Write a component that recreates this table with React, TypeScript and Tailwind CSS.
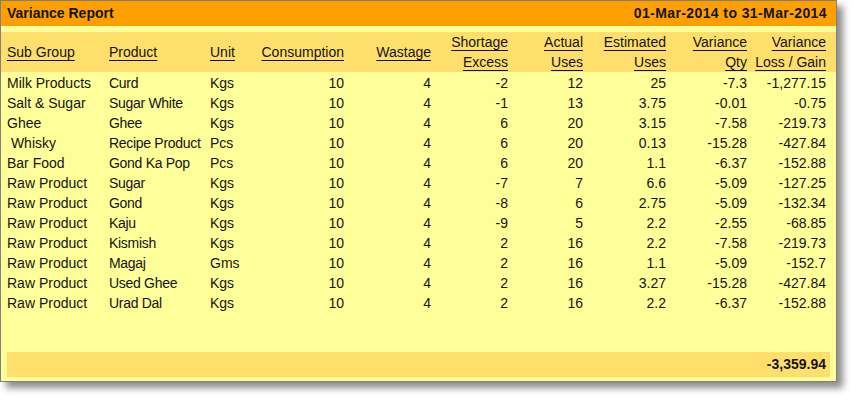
import React from "react";

const rows: string[][] = [
  ["Milk Products", "Curd", "Kgs", "10", "4", "-2", "12", "25", "-7.3", "-1,277.15"],
  ["Salt & Sugar", "Sugar White", "Kgs", "10", "4", "-1", "13", "3.75", "-0.01", "-0.75"],
  ["Ghee", "Ghee", "Kgs", "10", "4", "6", "20", "3.15", "-7.58", "-219.73"],
  ["\u00a0Whisky", "Recipe Product", "Pcs", "10", "4", "6", "20", "0.13", "-15.28", "-427.84"],
  ["Bar Food", "Gond Ka Pop", "Pcs", "10", "4", "6", "20", "1.1", "-6.37", "-152.88"],
  ["Raw Product", "Sugar", "Kgs", "10", "4", "-7", "7", "6.6", "-5.09", "-127.25"],
  ["Raw Product", "Gond", "Kgs", "10", "4", "-8", "6", "2.75", "-5.09", "-132.34"],
  ["Raw Product", "Kaju", "Kgs", "10", "4", "-9", "5", "2.2", "-2.55", "-68.85"],
  ["Raw Product", "Kismish", "Kgs", "10", "4", "2", "16", "2.2", "-7.58", "-219.73"],
  ["Raw Product", "Magaj", "Gms", "10", "4", "2", "16", "1.1", "-5.09", "-152.7"],
  ["Raw Product", "Used Ghee", "Kgs", "10", "4", "2", "16", "3.27", "-15.28", "-427.84"],
  ["Raw Product", "Urad Dal", "Kgs", "10", "4", "2", "16", "2.2", "-6.37", "-152.88"],
];

const headers: string[][] = [
  ["Sub Group"],
  ["Product"],
  ["Unit"],
  ["Consumption"],
  ["Wastage"],
  ["Shortage", "Excess"],
  ["Actual", "Uses"],
  ["Estimated", "Uses"],
  ["Variance", "Qty"],
  ["Variance", "Loss / Gain"],
];

const grid =
  "grid grid-cols-[102px_101px_40px_94px_87px_77px_75px_83px_81px_79px]";

export default function App() {
  return (
    <div className="w-[852px] h-[399px] bg-white font-['Liberation_Sans',Arial,sans-serif] text-[14px] text-[#141414]">
      <div className="w-[837px] h-[382px] border border-[#7f7f7f] bg-[#ffff99] flex flex-col shadow-[6px_6px_7px_rgba(0,0,0,0.45)]">
        <div className="h-[25px] bg-[#ffa000] flex items-center justify-between pl-[6px] pr-[9px] font-bold">
          <span>Variance Report</span>
          <span className="tracking-[0.4px]">01-Mar-2014 to 31-Mar-2014</span>
        </div>
        <div className="mt-[6px] h-[40px] bg-[#ffdf6b] pl-[6px]">
          <div className={grid + " h-full"}>
            {headers.map((h, i) => (
              <div
                key={i}
                className={
                  "flex flex-col justify-center leading-[20px] " +
                  (i < 3 ? "items-start" : "items-end")
                }
              >
                {h.map((t, j) => (
                  <span key={j} className="underline underline-offset-[3px] whitespace-nowrap">
                    {t}
                  </span>
                ))}
              </div>
            ))}
          </div>
        </div>
        <div className="mt-px pl-[6px]">
          {rows.map((r, i) => (
            <div key={i} className={grid + " h-[20px] leading-[20px]"}>
              {r.map((c, j) => (
                <div
                  key={j}
                  className={
                    "whitespace-nowrap " +
                    (j < 3 ? "text-left" : "text-right") +
                    (j === 1 ? " tracking-[-0.3px]" : "")
                  }
                >
                  {c}
                </div>
              ))}
            </div>
          ))}
        </div>
        <div className="flex-1" />
        <div className="mx-[6px] mb-[4px] h-[25px] bg-[#ffdf6b] flex items-center justify-end pr-[4px] font-bold">
          -3,359.94
        </div>
      </div>
    </div>
  );
}
